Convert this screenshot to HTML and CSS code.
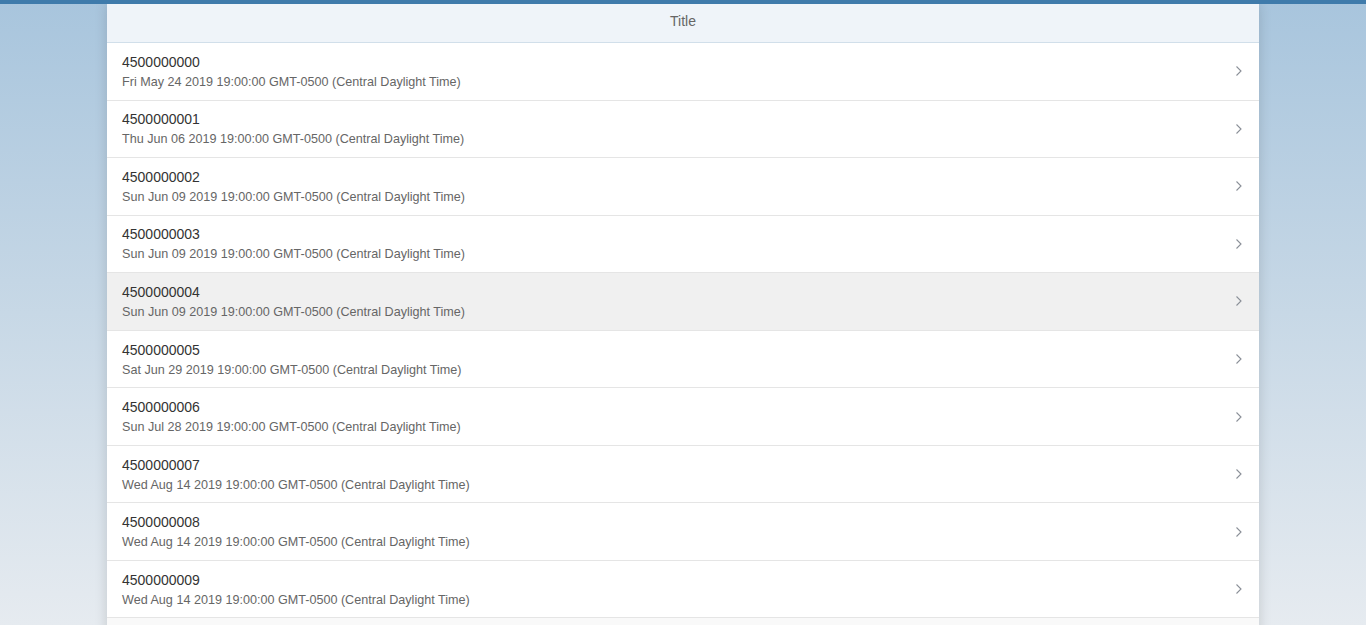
FILE: index.html
```html
<!DOCTYPE html>
<html>
<head>
<meta charset="utf-8">
<link rel="stylesheet" href="styles.css">
</head>
<body>
<div class="topbar"></div>
<div class="stage">
  <div class="panel">
    <div class="header">Title</div>
    <ul class="list">
      <li class="item"><div class="texts"><div class="t">4500000000</div><div class="d">Fri May 24 2019 19:00:00 GMT-0500 (Central Daylight Time)</div></div><svg class="chev" width="8" height="12" viewBox="0 0 8 12"><path d="M1.5 1.5 L6 6 L1.5 10.5" fill="none" stroke="#8a8f97" stroke-width="1.1"/></svg></li>
      <li class="item"><div class="texts"><div class="t">4500000001</div><div class="d">Thu Jun 06 2019 19:00:00 GMT-0500 (Central Daylight Time)</div></div><svg class="chev" width="8" height="12" viewBox="0 0 8 12"><path d="M1.5 1.5 L6 6 L1.5 10.5" fill="none" stroke="#8a8f97" stroke-width="1.1"/></svg></li>
      <li class="item"><div class="texts"><div class="t">4500000002</div><div class="d">Sun Jun 09 2019 19:00:00 GMT-0500 (Central Daylight Time)</div></div><svg class="chev" width="8" height="12" viewBox="0 0 8 12"><path d="M1.5 1.5 L6 6 L1.5 10.5" fill="none" stroke="#8a8f97" stroke-width="1.1"/></svg></li>
      <li class="item"><div class="texts"><div class="t">4500000003</div><div class="d">Sun Jun 09 2019 19:00:00 GMT-0500 (Central Daylight Time)</div></div><svg class="chev" width="8" height="12" viewBox="0 0 8 12"><path d="M1.5 1.5 L6 6 L1.5 10.5" fill="none" stroke="#8a8f97" stroke-width="1.1"/></svg></li>
      <li class="item hover"><div class="texts"><div class="t">4500000004</div><div class="d">Sun Jun 09 2019 19:00:00 GMT-0500 (Central Daylight Time)</div></div><svg class="chev" width="8" height="12" viewBox="0 0 8 12"><path d="M1.5 1.5 L6 6 L1.5 10.5" fill="none" stroke="#8a8f97" stroke-width="1.1"/></svg></li>
      <li class="item"><div class="texts"><div class="t">4500000005</div><div class="d">Sat Jun 29 2019 19:00:00 GMT-0500 (Central Daylight Time)</div></div><svg class="chev" width="8" height="12" viewBox="0 0 8 12"><path d="M1.5 1.5 L6 6 L1.5 10.5" fill="none" stroke="#8a8f97" stroke-width="1.1"/></svg></li>
      <li class="item"><div class="texts"><div class="t">4500000006</div><div class="d">Sun Jul 28 2019 19:00:00 GMT-0500 (Central Daylight Time)</div></div><svg class="chev" width="8" height="12" viewBox="0 0 8 12"><path d="M1.5 1.5 L6 6 L1.5 10.5" fill="none" stroke="#8a8f97" stroke-width="1.1"/></svg></li>
      <li class="item"><div class="texts"><div class="t">4500000007</div><div class="d">Wed Aug 14 2019 19:00:00 GMT-0500 (Central Daylight Time)</div></div><svg class="chev" width="8" height="12" viewBox="0 0 8 12"><path d="M1.5 1.5 L6 6 L1.5 10.5" fill="none" stroke="#8a8f97" stroke-width="1.1"/></svg></li>
      <li class="item"><div class="texts"><div class="t">4500000008</div><div class="d">Wed Aug 14 2019 19:00:00 GMT-0500 (Central Daylight Time)</div></div><svg class="chev" width="8" height="12" viewBox="0 0 8 12"><path d="M1.5 1.5 L6 6 L1.5 10.5" fill="none" stroke="#8a8f97" stroke-width="1.1"/></svg></li>
      <li class="item"><div class="texts"><div class="t">4500000009</div><div class="d">Wed Aug 14 2019 19:00:00 GMT-0500 (Central Daylight Time)</div></div><svg class="chev" width="8" height="12" viewBox="0 0 8 12"><path d="M1.5 1.5 L6 6 L1.5 10.5" fill="none" stroke="#8a8f97" stroke-width="1.1"/></svg></li>
    </ul>
    <div class="more"></div>
  </div>
</div>
</body>
</html>
```
FILE: styles.css
```css
html, body {
  margin: 0;
  padding: 0;
  height: 100%;
  overflow: hidden;
}
body {
  font-family: "Liberation Sans", Arial, sans-serif;
  background: linear-gradient(to bottom, #a8c5dd 0%, #c4d6e5 45%, #e6ebf0 100%);
  display: flex;
  flex-direction: column;
}
.topbar {
  height: 4px;
  background: #3f7bab;
  flex: none;
}
.stage {
  flex: 1;
  display: flex;
  justify-content: center;
  overflow: hidden;
}
.panel {
  width: 1152px;
  background: #ffffff;
  box-shadow: 0 0 12px rgba(0, 0, 0, 0.15);
  height: max-content;
}
.header {
  height: 38px;
  line-height: 34px;
  background: #eff4f9;
  border-bottom: 1px solid #d1dfea;
  text-align: center;
  color: #666666;
  font-size: 14px;
}
.list {
  list-style: none;
  margin: 0;
  padding: 0;
}
.item {
  height: 56.56px;
  border-bottom: 1px solid #e5e5e5;
  display: flex;
  align-items: center;
  padding: 0 16px 0 15px;
  background: #ffffff;
}
.item.hover {
  background: #f0f0f0;
}
.texts {
  flex: 1;
  padding-top: 1px;
}
.t {
  font-size: 14px;
  color: #333333;
  line-height: 18px;
}
.d {
  font-size: 12.6px;
  color: #666666;
  line-height: 18px;
  margin-top: 2px;
}
.chev {
  flex: none;
}
.more {
  height: 40px;
  background: #f9f9f9;
}
```
